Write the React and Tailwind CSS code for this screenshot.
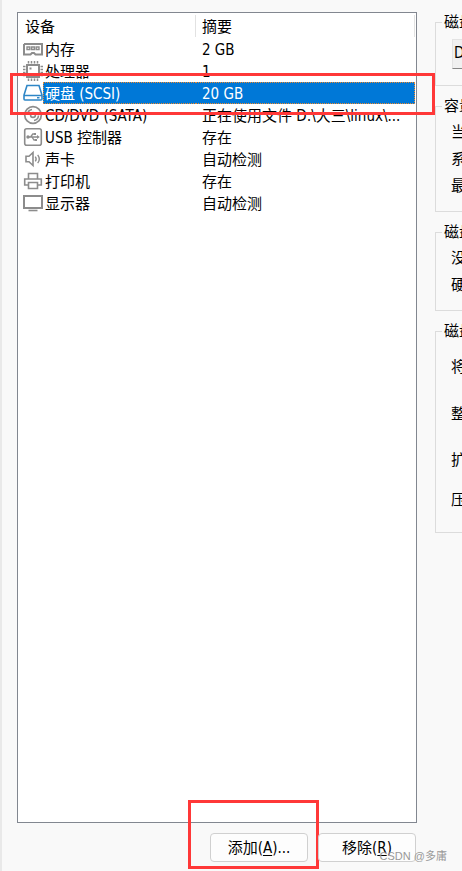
import React, { useState } from 'react'
import clsx from 'clsx'

const ICONS = {
  memory: (
    <>
      <path d="M1 5h18v3M1 5v10.5h6.5l1.5-1.5h2l1.5 1.5H19V8" strokeWidth="2" />
      <path d="M4 8h2.8v2.5H4zM8.6 8h2.8v2.5H8.6zM13.2 8H16v2.5h-2.8z" strokeWidth="1.4" />
    </>
  ),
  cpu: (
    <>
      <rect x="4" y="4" width="12" height="12" strokeWidth="2" />
      <path d="M5.5 0v2.5M8.5 0v2.5M11.5 0v2.5M14.5 0v2.5M5.5 17.5V20M8.5 17.5V20M11.5 17.5V20M14.5 17.5V20M0 5.5h2.5M0 8.5h2.5M0 11.5h2.5M0 14.5h2.5M17.5 5.5H20M17.5 8.5H20M17.5 11.5H20M17.5 14.5H20" strokeWidth="1.5" />
      <path d="M6.5 7.5h2M12 13h1.5" strokeWidth="1.8" />
    </>
  ),
  disk: (
    <>
      <path d="M4 2.5h12l3 9.5v4a1 1 0 0 1-1 1H2a1 1 0 0 1-1-1v-4z" fill="#fff" strokeWidth="1.6" />
      <path d="M1 12.5h18M14 14.8h2.5" strokeWidth="1.5" />
    </>
  ),
  cd: (
    <>
      <circle cx="10" cy="10" r="8.3" strokeWidth="1.7" />
      <circle cx="10" cy="10" r="2.4" strokeWidth="1.6" />
      <path d="M4.5 9.5a5.5 5.5 0 0 1 4.5-5M15.5 10.5a5.5 5.5 0 0 1-4.5 5" strokeWidth="1.6" />
    </>
  ),
  usb: (
    <>
      <rect x="1.7" y="1.7" width="16.6" height="16.6" rx="2" strokeWidth="1.6" />
      <path d="M5 10h9.5M7.5 10l2.3-3h1.7M9 10l2 3h1.5" strokeWidth="1.3" />
      <path d="M14 8l2.8 2-2.8 2zM11 6h2v2h-2zM12 12h2v2h-2z" fill="currentColor" stroke="none" />
      <circle cx="5" cy="10" r="1.7" fill="currentColor" stroke="none" />
    </>
  ),
  sound: (
    <>
      <path d="M3 7.3h3l4-3.8v13l-4-3.8H3z" strokeWidth="1.6" />
      <path d="M12.3 7.6q1.7 2.4 0 4.8M14.7 5.8q3.2 4.2 0 8.4" strokeWidth="1.4" />
    </>
  ),
  printer: (
    <>
      <path d="M5.5 7.5v-5h9v5M5 14H1.7V8h16.6v6H15" strokeWidth="1.6" />
      <path d="M5.5 11.5h9v6h-9z" strokeWidth="1.6" />
    </>
  ),
  monitor: (
    <>
      <rect x="1" y="3" width="18" height="12" strokeWidth="2" />
      <path d="M5.5 17.5h9" strokeWidth="1.6" />
    </>
  ),
}

const DEVICES = [
  { id: 'memory', name: '内存', summary: '2 GB' },
  { id: 'cpu', name: '处理器', summary: '1' },
  { id: 'disk', name: '硬盘 (SCSI)', summary: '20 GB' },
  { id: 'cd', name: 'CD/DVD (SATA)', summary: '正在使用文件 D:\\大三\\linux\\...' },
  { id: 'usb', name: 'USB 控制器', summary: '存在' },
  { id: 'sound', name: '声卡', summary: '自动检测' },
  { id: 'printer', name: '打印机', summary: '存在' },
  { id: 'monitor', name: '显示器', summary: '自动检测' },
]

function DeviceIcon({ id, active }) {
  return (
    <svg viewBox="0 0 20 20" fill="none" stroke="currentColor" aria-hidden="true" className={clsx('size-5 shrink-0', active ? 'text-[#2f86c6]' : 'text-[#8c8c8c]')}>
      {ICONS[id]}
    </svg>
  )
}

function DeviceTable({ selected, onSelect }) {
  return (
    <table className="w-full table-fixed border-collapse text-left">
      <thead>
        <tr className="h-[23px] align-top">
          <th className="w-[178px] p-0 font-normal">
            <div className="flex h-[22px] items-center border-r border-[#e2e2e2] pt-[2px] pl-[7px]">设备</div>
          </th>
          <th className="p-0 pr-px font-normal">
            <div className="flex h-[22px] items-center border-r border-[#e2e2e2] pt-[2px] pl-[6px]">摘要</div>
          </th>
        </tr>
      </thead>
      <tbody>
        {DEVICES.map((d) => {
          const active = d.id === selected
          const mark = active ? 'border-[#f08a2c] bg-[#0078d7] text-white' : 'border-transparent'
          return (
            <tr key={d.id} onClick={() => onSelect(d.id)} aria-selected={active} className="h-[22px] cursor-default">
              <td className="p-0">
                <div className="flex h-[22px] items-center pl-[5px]">
                  <DeviceIcon id={d.id} active={active} />
                  <span className={clsx('flex h-[22px] flex-1 items-center border-y border-l border-dotted pt-[2px] pl-px whitespace-nowrap', mark)}>{d.name}</span>
                </div>
              </td>
              <td className="p-0 pr-px">
                <div className={clsx('flex h-[22px] items-center border-y border-r border-dotted pt-[2px] pl-[6px] whitespace-nowrap', mark)}>{d.summary}</div>
              </td>
            </tr>
          )
        })}
      </tbody>
    </table>
  )
}

function Group({ title, className, children }) {
  return (
    <fieldset className={clsx('min-w-0 border border-r-0 border-[#dcdcdc] pl-[6px] whitespace-nowrap', className)}>
      <legend className="px-[2px] leading-5">{title}</legend>
      <div className="pl-[9px]">{children}</div>
    </fieldset>
  )
}

function DialogButton({ label, hotkey, suffix, children }) {
  return (
    <div className="relative">
      <button type="button" className="h-[29px] w-[98px] rounded border border-[#d0d0d0] bg-[#fdfdfd] hover:bg-[#e5f1fb]">
        {label}(<span className="underline underline-offset-2">{hotkey}</span>){suffix}
      </button>
      {children}
    </div>
  )
}

export default function App() {
  const [selected, setSelected] = useState('disk')
  const [file, setFile] = useState('D:\\大三\\linux\\CentOS.vmdk')

  return (
    <main className="relative flex min-h-screen overflow-hidden border-l-2 border-[#e9e9e9] bg-[#f9f9f9] pt-3 pb-[9px] pl-[15px] font-['DejaVu_Sans_Condensed','Noto_Sans_CJK_SC',sans-serif] text-[15px] leading-5 text-black">
      <section className="flex w-[400px] shrink-0 flex-col gap-[10px]">
        <div className="relative flex-1 border border-[#828790] bg-white pt-[2px]">
          <DeviceTable selected={selected} onSelect={setSelected} />
          <div className="pointer-events-none absolute top-[60px] -right-[19px] -left-2 h-[42px] border-3 border-[#ff3838]" />
        </div>
        <div className="flex justify-end gap-[10px] pr-px">
          <DialogButton label="添加" hotkey="A" suffix="...">
            <div className="pointer-events-none absolute -top-[33px] -right-[11px] -bottom-[7px] -left-[22px] border-3 border-[#ff3838]" />
          </DialogButton>
          <DialogButton label="移除" hotkey="R" />
        </div>
      </section>

      <section className="ml-[18px] flex min-w-0 flex-1 flex-col gap-[10px] overflow-hidden">
        <Group title="磁盘文件" className="h-[74px]">
          <input
            aria-label="磁盘文件"
            value={file}
            onChange={(e) => setFile(e.target.value)}
            className="mt-[7px] ml-px h-[30px] w-[360px] border border-[#e3e3e3] border-b-[#868686] bg-[#f0f0f0] px-px pb-[6px]"
          />
        </Group>
        <Group title="容量" className="h-[116px]">
          <p className="mt-[3px] leading-[27px]">当前大小:</p>
          <p className="leading-[27px]">系统可用空间:</p>
          <p className="leading-[27px]">最大大小:</p>
        </Group>
        <Group title="磁盘信息" className="h-[89px]">
          <p className="mt-[3px] leading-[27px]">没有为此硬盘预分配磁盘空间。</p>
          <p className="leading-[27px]">硬盘内容存储在单个文件中。</p>
        </Group>
        <Group title="磁盘实用工具" className="h-[212px]">
          <div className="flex flex-col pt-[3px]">
            <p className="leading-[46px]">将该虚拟机磁盘映射到本地卷。</p>
            <p className="leading-[48px]">整理文件碎片并整合可用空间。</p>
            <p className="leading-[44px]">扩展磁盘容量。</p>
            <p className="leading-9">压缩磁盘以回收未使用的空间。</p>
          </div>
        </Group>
      </section>

      <span className="pointer-events-none absolute right-[15px] bottom-[7px] font-['Liberation_Sans','Noto_Sans_CJK_SC',sans-serif] text-[11px] leading-4 text-[#999]">CSDN @多庸</span>
    </main>
  )
}
